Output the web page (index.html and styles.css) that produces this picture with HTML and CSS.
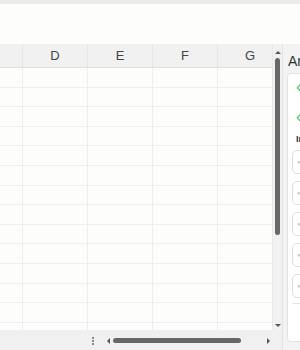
FILE: index.html
```html
<!DOCTYPE html>
<html lang="en">
<head>
  <meta charset="UTF-8" />
  <meta name="viewport" content="width=device-width, initial-scale=1.0"/>
  <title>Sheet</title>
  <link rel="stylesheet" href="styles.css">
</head>
<body>

<div class="topbar"></div>
<div class="toolbar"></div>

<div class="main">
  <div class="sheet">
    <div class="sheet-body">
      <div class="grid-wrap">
        <table class="grid" id="grid">
          <thead>
            <tr>
              <th class="corner"></th>
              <th>D</th>
              <th>E</th>
              <th>F</th>
              <th>G</th>
            </tr>
          </thead>
          <tbody id="rows"></tbody>
        </table>
      </div>
      <div class="vscroll">
        <span class="arrow-up"></span>
        <div class="vthumb"></div>
        <span class="arrow-down"></span>
      </div>
    </div>
    <div class="hbar">
      <span class="dots"></span>
      <span class="arrow-left"></span>
      <div class="hthumb"></div>
      <span class="arrow-right"></span>
    </div>
  </div>

  <aside class="panel">
    <div class="panel-title">Analyze</div>
    <div class="card">
      <div class="back">&lsaquo;</div>
      <div class="back">&lsaquo;</div>
      <div class="label">Insights</div>
      <div class="option"><span>&#9679;</span></div>
      <div class="option"><span>&#9679;</span></div>
      <div class="option"><span>&#9679;</span></div>
      <div class="option"><span>&#9679;</span></div>
      <div class="option"><span>&#9679;</span></div>
      <div class="card-rule"></div>
    </div>
  </aside>
</div>

<script>
  // empty spreadsheet rows
  const rows = document.getElementById("rows");
  for (let i = 0; i < 14; i++) {
    const tr = document.createElement("tr");
    for (let j = 0; j < 5; j++) {
      tr.appendChild(document.createElement("td"));
    }
    rows.appendChild(tr);
  }
</script>

</body>
</html>
```

FILE: styles.css
```css
body {
  font-family: "Liberation Sans", Arial, sans-serif;
  margin: 0;
  padding: 0;
  width: 300px;
  height: 350px;
  overflow: hidden;
  background: #fdfdfc;
}
.topbar {
  height: 4px;
  background: #ececec;
}
.toolbar {
  height: 40px;
  background: #fdfdfc;
}
.main {
  display: flex;
  height: 306px;
}
.sheet {
  width: 282px;
  display: flex;
  flex-direction: column;
}
.sheet-body {
  display: flex;
  flex: 1;
  min-height: 0;
}
.grid-wrap {
  width: 272px;
  overflow: hidden;
}
.grid {
  border-collapse: collapse;
  table-layout: fixed;
  width: 282px;
}
.grid th {
  height: 23px;
  padding: 0;
  background: #f1f1f1;
  border-bottom: 1px solid #e0e0e0;
  border-right: 1px solid #e6e6e6;
  font-weight: normal;
  font-size: 13px;
  color: #454545;
  width: 64px;
  text-align: center;
}
.grid th.corner {
  width: 22px;
}
.grid td {
  height: 18.6px;
  padding: 0;
  border-right: 1px solid #eeeeee;
  border-bottom: 1px solid #efefef;
}
.vscroll {
  width: 10px;
  background: #f1f1f1;
  border-left: 1px solid #e8e8e8;
  display: flex;
  flex-direction: column;
  align-items: center;
  padding: 7px 0 3px;
  box-sizing: border-box;
}
.arrow-up, .arrow-down {
  width: 0;
  height: 0;
  border-left: 3px solid transparent;
  border-right: 3px solid transparent;
}
.arrow-up {
  border-bottom: 3px solid #555;
}
.arrow-down {
  border-top: 3px solid #555;
  margin-top: auto;
}
.vthumb {
  width: 5px;
  height: 177px;
  margin-top: 4px;
  background: #676767;
  border-radius: 3px;
}
.hbar {
  height: 20px;
  background: #f0f0f0;
  display: flex;
  align-items: center;
  padding-top: 1px;
  box-sizing: border-box;
}
.dots {
  width: 2px;
  height: 8px;
  margin-left: 92px;
  margin-right: 10px;
  background: repeating-linear-gradient(#888 0 2px, transparent 2px 3px);
}
.arrow-left, .arrow-right {
  width: 0;
  height: 0;
  border-top: 3px solid transparent;
  border-bottom: 3px solid transparent;
}
.arrow-left {
  border-right: 3px solid #555;
  margin-left: 3px;
}
.arrow-right {
  border-left: 3px solid #555;
  margin-left: 26px;
}
.hthumb {
  width: 128px;
  height: 5px;
  margin-left: 3px;
  background: #676767;
  border-radius: 3px;
}
.panel {
  flex: 1;
  background: #f3f3f3;
  border-left: 1px solid #e4e4e4;
  display: flex;
  flex-direction: column;
  overflow: hidden;
}
.panel-title {
  height: 28px;
  line-height: 34px;
  padding-left: 5px;
  font-size: 14px;
  color: #333;
  white-space: nowrap;
}
.card {
  margin: 1px 0 8px 4px;
  flex: 1;
  width: 40px;
  background: #fff;
  border: 1px solid #e2e2e2;
  border-radius: 4px;
  box-sizing: border-box;
  padding: 4px 0 0 4px;
}
.back {
  height: 30px;
  line-height: 18px;
  padding-left: 4px;
  color: #45c063;
  font-size: 16px;
}
.label {
  font-size: 9px;
  font-weight: bold;
  color: #333;
  padding-left: 4px;
  margin-top: -4px;
  height: 16px;
  white-space: nowrap;
}
.option {
  height: 24px;
  margin-bottom: 7px;
  border: 1px solid #dedede;
  border-radius: 5px;
  box-sizing: border-box;
  display: flex;
  align-items: center;
  padding-left: 4px;
  font-size: 6px;
  color: #c8c8c8;
}
.card-rule {
  margin-top: -2px;
  border-top: 1px solid #e3e3e3;
}
```
